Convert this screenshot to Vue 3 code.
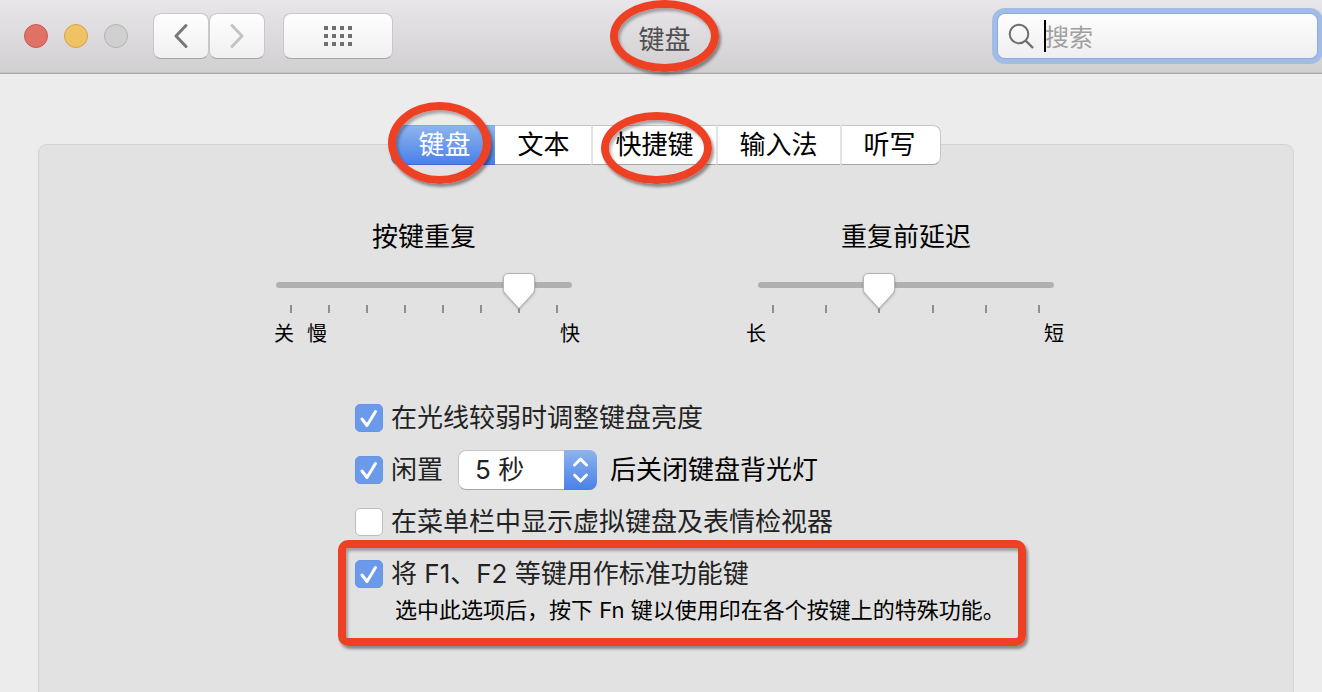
<script setup>
import { ref } from 'vue'

const tabs = [
  { name: '键盘', marked: 'first' },
  { name: '文本' },
  { name: '快捷键', marked: 'wide' },
  { name: '输入法' },
  { name: '听写' },
]
const activeTab = ref('键盘')
const query = ref('')

const sliders = ref([
  { id: 'repeat', title: '按键重复', steps: 8, value: 6, left: ['关', '慢'], right: '快' },
  { id: 'delay', title: '重复前延迟', steps: 6, value: 2, left: ['长'], right: '短' },
])

const dim = ref(true)
const idle = ref(true)
const viewer = ref(false)
const fnKeys = ref(true)
const seconds = ref('5')

const thumbPosition = (s) => {
  const part = s.value / (s.steps - 1)
  return { left: `calc(15px + (100% - 30px) * ${part})` }
}
</script>

<template>
  <div class="window">
    <header class="titlebar">
      <div class="controls">
        <div class="lights">
          <button class="light close" aria-label="关闭"></button>
          <button class="light minimize" aria-label="最小化"></button>
          <button class="light zoom" aria-label="缩放" disabled></button>
        </div>
        <div class="nav">
          <button class="tool" aria-label="后退">
            <svg width="16" height="26" viewBox="0 0 16 26"><path d="M13 2.5 3 13l10 10.500" fill="none" stroke="#777" stroke-width="3" stroke-linecap="round" stroke-linejoin="round" /></svg>
          </button>
          <button class="tool" aria-label="前进">
            <svg width="16" height="26" viewBox="0 0 16 26"><path d="M3 2.500 13 13 3 23.500" fill="none" stroke="#c3c3c3" stroke-width="3" stroke-linecap="round" stroke-linejoin="round" /></svg>
          </button>
        </div>
        <button class="tool all" aria-label="显示全部">
          <svg width="28" height="20" viewBox="0 0 28 20" fill="#6f6f6f" shape-rendering="crispEdges">
            <template v-for="r in 3" :key="r">
              <rect v-for="c in 4" :key="c" :x="(c - 1) * 8" :y="(r - 1) * 8" width="4" height="4" />
            </template>
          </svg>
        </button>
      </div>
      <h1 class="title">键盘<span class="ring ring-title"></span></h1>
      <label class="search">
        <svg width="26" height="26" viewBox="0 0 26 26" fill="none" stroke="#6d6d6d" stroke-width="2">
          <circle cx="11" cy="11" r="9.300" /><path d="M17.500 17.500 25 25" stroke-width="2.400" />
        </svg>
        <span class="field">
          <span class="caret"></span>
          <input v-model="query" type="text" placeholder="搜索" aria-label="搜索" />
        </span>
      </label>
    </header>

    <main class="content">
      <div class="tabs" role="tablist">
        <button
          v-for="tab in tabs"
          :key="tab.name"
          role="tab"
          class="tab"
          :class="{ active: tab.name === activeTab }"
          :aria-selected="tab.name === activeTab"
          @click="activeTab = tab.name"
        >
          {{ tab.name }}
          <span v-if="tab.marked" class="ring" :class="'ring-' + tab.marked"></span>
        </button>
      </div>

      <section class="panel">
        <div class="sliders">
          <div v-for="s in sliders" :key="s.id" class="slider">
            <label class="slider-title" :for="s.id">{{ s.title }}</label>
            <div class="rail">
              <input :id="s.id" v-model.number="s.value" type="range" min="0" :max="s.steps - 1" step="1" />
              <svg class="thumb" :style="thumbPosition(s)" width="36" height="40" viewBox="0 0 36 40">
                <path d="M7 1.500h22a4.500 4.500 0 0 1 4.500 4.500v11.500q0 2-1.300 3.500L18 36.500 3.800 21q-1.300-1.500-1.300-3.500V6A4.500 4.500 0 0 1 7 1.500z" fill="#fff" stroke="#b4b4b4" stroke-width="1" />
              </svg>
            </div>
            <div class="ticks"><i v-for="n in s.steps" :key="n"></i></div>
            <div class="marks" :class="s.id">
              <span v-for="l in s.left" :key="l">{{ l }}</span>
              <span class="end">{{ s.right }}</span>
            </div>
          </div>
        </div>

        <div class="options">
          <div class="row">
            <label class="check">
              <span class="box"><input v-model="dim" type="checkbox" /><svg viewBox="0 0 28 28"><path d="M7 15l5 6.500L20.500 7.500" /></svg></span>
              在光线较弱时调整键盘亮度
            </label>
          </div>
          <div class="row">
            <label class="check">
              <span class="box"><input v-model="idle" type="checkbox" /><svg viewBox="0 0 28 28"><path d="M7 15l5 6.500L20.500 7.500" /></svg></span>
              闲置
            </label>
            <span class="popup">
              <select id="seconds" v-model="seconds" aria-label="闲置时间">
                <option value="5">5 秒</option>
                <option value="10">10 秒</option>
                <option value="30">30 秒</option>
              </select>
              <svg class="arrows" width="33" height="40" viewBox="0 0 33 40"><path d="M10.500 15l6-6 6 6M10.500 25l6 6 6-6" /></svg>
            </span>
            <label class="after" for="seconds">后关闭键盘背光灯</label>
          </div>
          <div class="row">
            <label class="check">
              <span class="box"><input v-model="viewer" type="checkbox" /><svg viewBox="0 0 28 28"><path d="M7 15l5 6.500L20.500 7.500" /></svg></span>
              在菜单栏中显示虚拟键盘及表情检视器
            </label>
          </div>
          <div class="highlighted">
            <div class="row">
              <label class="check">
                <span class="box"><input v-model="fnKeys" type="checkbox" aria-describedby="fn-hint" /><svg viewBox="0 0 28 28"><path d="M7 15l5 6.500L20.500 7.500" /></svg></span>
                将 F1、F2 等键用作标准功能键
              </label>
            </div>
            <p id="fn-hint" class="hint">选中此选项后，按下 Fn 键以使用印在各个按键上的特殊功能。</p>
          </div>
        </div>
      </section>
    </main>
  </div>
</template>

<style>
body {
  margin: 0;
  background: #ececec;
}
</style>

<style scoped>
.window,
.window button,
.window input,
.window select {
  font-family: Inter, "Noto Sans CJK SC", sans-serif;
  font-size: 26px;
  line-height: 36px;
  box-sizing: border-box;
}
.window {
  min-height: 100vh;
  display: flex;
  flex-direction: column;
  background: #ececec;
  color: #000;
  overflow: hidden;
}
button,
input {
  margin: 0;
  padding: 0;
}
.titlebar {
  position: relative;
  z-index: 2;
  box-sizing: border-box;
  height: 74px;
  padding: 0 5px 2px 12px;
  display: grid;
  grid-template-columns: 1fr auto 1fr;
  align-items: center;
  background: linear-gradient(#e8e6e9, #d1cfd2);
  border-bottom: 1px solid #a9a7aa;
  box-shadow: inset 0 -1px #c3c1c4;
}
.controls {
  display: flex;
  align-items: center;
  padding-left: 12px;
}
.lights {
  display: flex;
  gap: 16px;
  margin-right: 25px;
}
.light {
  width: 24px;
  height: 24px;
  border: 1px solid #c95a50;
  border-radius: 50%;
  background: #e07166;
}
.minimize {
  background: #efc264;
  border-color: #d3a347;
}
.zoom {
  background: #d0d0d0;
  border-color: #b2b2b2;
}
.nav {
  display: flex;
  margin-right: 18px;
}
.tool {
  display: flex;
  align-items: center;
  justify-content: center;
  width: 56px;
  height: 46px;
  border: 1px solid #c9c7ca;
  border-bottom-color: #a8a6a9;
  border-radius: 8px;
  background: linear-gradient(#fefefe, #f0f0f0);
}
.all {
  width: 110px;
}
.title {
  position: relative;
  margin: 0;
  padding-top: 8px;
  font-size: 26px;
  line-height: 36px;
  font-weight: 400;
  color: #4f4f4f;
}
.search {
  justify-self: end;
  box-sizing: border-box;
  width: 319px;
  height: 44px;
  padding-left: 10px;
  display: flex;
  align-items: center;
  gap: 11px;
  border-radius: 7px;
  background: linear-gradient(#fdfdfd, #efefef);
  box-shadow: 0 0 0 1px #8aacdf, 0 0 0 6px #a2bce6;
}
.field {
  position: relative;
  flex: 1;
  display: flex;
}
.window .field input {
  width: 100%;
  height: 36px;
  padding-top: 4px;
  border: 0;
  outline: 0;
  background: transparent;
  font-size: 24px;
  line-height: 32px;
}
.field input::placeholder {
  color: #a0a0a0;
  opacity: 1;
}
.caret {
  position: absolute;
  left: -1px;
  top: 2px;
  width: 2px;
  height: 32px;
  background: #000;
}
.ring {
  position: absolute;
  z-index: 3;
  box-sizing: border-box;
  border: 8px solid #ee4023;
  border-radius: 50%;
  box-shadow: 2px 3px 3px rgba(0, 0, 0, 0.4), inset 2px 3px 3px rgba(0, 0, 0, 0.3);
  pointer-events: none;
}
.ring-title {
  inset: -14px -28px;
}
.ring-first {
  inset: -24px 4px -20px -3px;
}
.ring-wide {
  inset: -14px 4px -20px 8px;
}
.content {
  flex: 1;
  display: flex;
  flex-direction: column;
  padding: 51px 28px 0 38px;
}
.tabs {
  position: relative;
  z-index: 1;
  align-self: center;
  display: flex;
  height: 40px;
  margin-bottom: -21px;
}
.tab {
  position: relative;
  padding: 0 22px;
  border: 1px solid #c6c6c6;
  border-width: 1px 0;
  border-bottom-color: #a6a6a6;
  background: #fff;
  color: #000;
  white-space: nowrap;
}
.tab + .tab {
  border-left: 2px solid #e3e3e3;
}
.tab:first-child {
  padding: 0 25px 0 27px;
  border-radius: 8px 0 0 8px;
}
.tab:last-child {
  padding-right: 24px;
  border-right: 1px solid #c6c6c6;
  border-radius: 0 8px 8px 0;
}
.tab.active {
  background: linear-gradient(#8db4ee, #4a80e8);
  border-color: #80a8e4 transparent #3d6cd8;
  color: #fff;
}
.tab.active + .tab {
  border-left-color: #fff;
}
.tab.active + .tab {
  border-left-width: 0;
}
.panel {
  flex: 1;
  padding: 74px 22px 46px 20px;
  background: #e2e2e2;
  border: 1px solid #d3d3d3;
  border-bottom: 0;
  border-radius: 9px 9px 0 0;
}
.sliders {
  display: flex;
  justify-content: space-between;
  max-width: 778px;
  margin: 0 auto;
}
.slider {
  width: 296px;
}
.slider-title {
  display: block;
  text-align: center;
}
.rail {
  position: relative;
  z-index: 1;
  height: 36px;
  margin-top: 18px;
}
.rail input {
  display: block;
  width: 100%;
  height: 24px;
  appearance: none;
  background: transparent;
}
.rail input::-webkit-slider-runnable-track {
  height: 6px;
  border-radius: 3px;
  background: #b0b0b0;
}
.rail input::-webkit-slider-thumb {
  appearance: none;
  width: 32px;
  height: 24px;
  margin-top: -9px;
  background: transparent;
}
.thumb {
  position: absolute;
  top: -1px;
  margin-left: -18px;
  pointer-events: none;
  filter: drop-shadow(0 1px 1px rgba(0, 0, 0, 0.25));
}
.ticks {
  display: flex;
  justify-content: space-between;
  margin: -4px 14px 0;
}
.ticks i {
  width: 2px;
  height: 8px;
  background: #8f8f8f;
}
.marks {
  display: flex;
  gap: 13px;
  margin: 6px -8px 0 -2px;
  font-size: 20px;
  line-height: 30px;
}
.marks.delay {
  margin-left: -12px;
  margin-right: -10px;
}
.marks .end {
  margin-left: auto;
}
.options {
  box-sizing: border-box;
  max-width: 778px;
  margin: 43px auto 0;
  padding-left: 79px;
}
.row {
  display: flex;
  align-items: center;
  height: 52px;
  white-space: nowrap;
}
.check {
  display: flex;
  align-items: center;
  gap: 8px;
  color: #222;
}
.box {
  display: grid;
  width: 28px;
  height: 28px;
}
.box > * {
  grid-area: 1 / 1;
}
.box input {
  appearance: none;
  width: 28px;
  height: 28px;
  border: 1px solid #bdbdbd;
  border-radius: 5px;
  background: #fff;
}
.box input:checked {
  border-color: #6695e6;
  background: #6b9aea;
}
.box svg {
  width: 28px;
  height: 28px;
  fill: none;
  stroke: #fff;
  stroke-width: 3;
  stroke-linecap: round;
  stroke-linejoin: round;
  pointer-events: none;
}
.popup {
  position: relative;
  display: flex;
  width: 139px;
  height: 40px;
  margin: 0 13px 0 15px;
}
.popup select {
  width: 100%;
  appearance: none;
  padding: 0 40px 0 16px;
  border: 1px solid #c6c6c6;
  border-bottom-color: #a6a6a6;
  border-radius: 8px;
  background: #fff;
  color: #222;
}
.arrows {
  position: absolute;
  top: 0;
  right: 0;
  border-radius: 0 8px 8px 0;
  background: linear-gradient(#8db4ee, #4a80e8);
  fill: none;
  stroke: #fff;
  stroke-width: 3;
  stroke-linecap: round;
  stroke-linejoin: round;
  pointer-events: none;
}
.highlighted {
  position: relative;
}
.highlighted::after {
  content: "";
  position: absolute;
  inset: -8px 28px -20px -17px;
  border: 8px solid #ee4023;
  border-radius: 10px;
  box-shadow: 2px 3px 3px rgba(0, 0, 0, 0.4), inset 2px 3px 3px rgba(0, 0, 0, 0.3);
  pointer-events: none;
}
.hint {
  margin: -6px 0 0;
  padding-left: 40px;
  font-size: 22px;
  line-height: 32px;
  white-space: nowrap;
}
</style>
